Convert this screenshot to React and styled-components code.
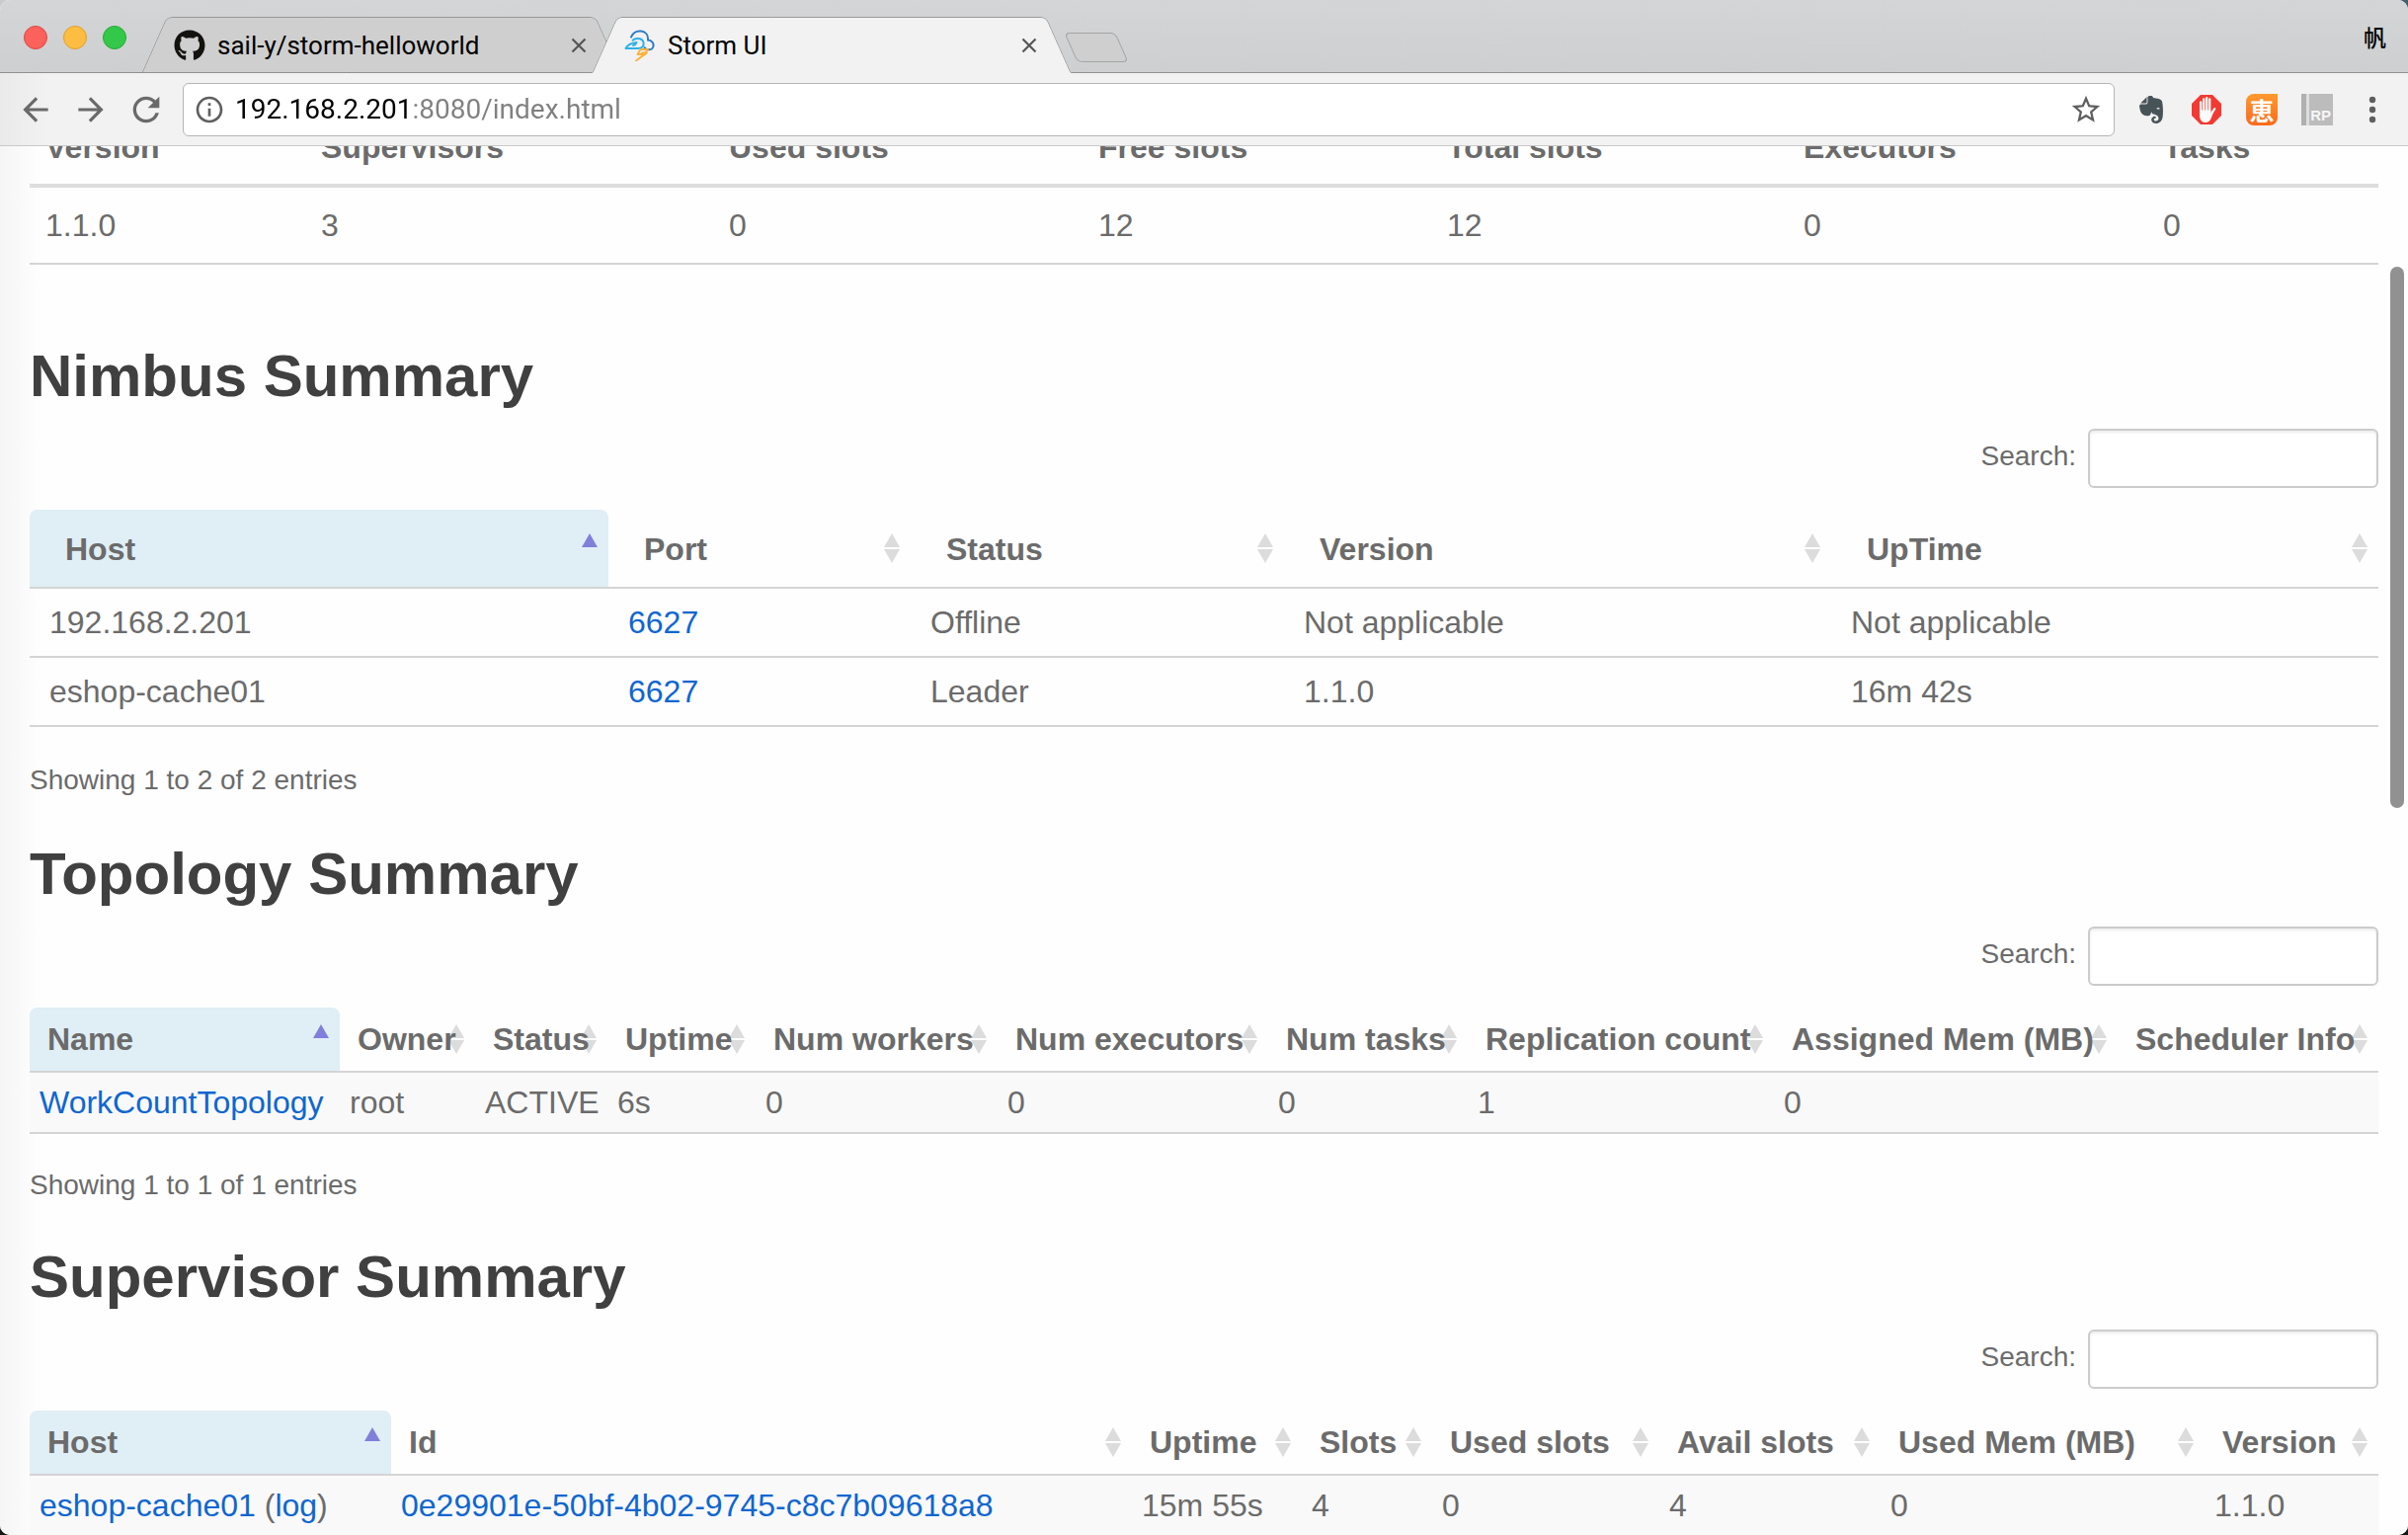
import React from "react";
import styled, { createGlobalStyle, css } from "styled-components";
import { FaEvernote, FaGithub } from "react-icons/fa";
import {
  MdArrowBack,
  MdArrowForward,
  MdInfoOutline,
  MdRefresh,
  MdStarBorder,
} from "react-icons/md";

const SANS = `"Liberation Sans", Arial, sans-serif`;
const CHROME = `Roboto, "Noto Sans CJK SC", sans-serif`;
const LINE = "#d4d4d4";

const GlobalStyle = createGlobalStyle`
  * { box-sizing: border-box; }
  body { margin: 0; background: #151515; }
  button { margin: 0; padding: 0; border: 0; background: none; color: inherit; font: inherit; cursor: pointer; }
`;

/* ---------- window ---------- */

const Desktop = styled.div`
  height: 100vh;
  background:
    linear-gradient(90deg, #c9cccd 50%, #41606c 50%) top / 100% 24px no-repeat,
    #151515;
`;

const Window = styled.div`
  display: flex;
  flex-direction: column;
  height: 100%;
  overflow: hidden;
  border-radius: 10px;
  background: #fefefe;
`;

const TabStrip = styled.div`
  flex: none;
  display: flex;
  align-items: flex-end;
  height: 74px;
  padding: 0 22px 0 24px;
  border-bottom: 1px solid #8f9091;
  background: linear-gradient(#d3d5d6, #cdcfd0);
  font-family: ${CHROME};
`;

const TrafficLights = styled.div`
  display: flex;
  gap: 16px;
  width: 120px;
  padding-bottom: 23px;
`;

const Light = styled.button`
  width: 24px;
  height: 24px;
  border: 1px solid ${(p) => p.$edge};
  border-radius: 50%;
  background: ${(p) => p.$fill};
`;

const tabSide = css`
  content: "";
  position: absolute;
  z-index: -1;
  top: 0;
  bottom: 0;
  border: 1px solid #97989a;
  border-bottom-color: ${(p) => (p.$active ? "#f2f2f2" : "#8f9091")};
  background: ${(p) => (p.$active ? "#f2f2f2" : "#cfcfcf")};
`;

const Tab = styled.div`
  position: relative;
  z-index: ${(p) => (p.$active ? 2 : 1)};
  display: flex;
  align-items: center;
  width: 484px;
  height: 57px;
  margin: 0 -28px -1px 0;
  padding: 0 34px 0 32px;

  &::before {
    ${tabSide}
    left: 12px;
    right: 40%;
    border-right: 0;
    border-radius: 6px 0 0 0;
    transform: skewX(-24deg);
  }

  &::after {
    ${tabSide}
    left: 40%;
    right: 12px;
    border-left: 0;
    border-radius: 0 6px 0 0;
    transform: skewX(24deg);
  }
`;

const TabLink = styled.a`
  flex: 1;
  display: flex;
  align-items: center;
  gap: 12px;
  color: #000;
  font-size: 26px;
  line-height: 32px;
  text-decoration: none;
  white-space: nowrap;

  svg {
    flex: none;
    width: 32px;
    height: 32px;
  }
`;

const CloseButton = styled.button`
  display: flex;
  width: 16px;
  height: 16px;
`;

const NewTab = styled.button`
  width: 52px;
  height: 30px;
  margin: 0 0 10px 28px;
  border: 1px solid #a3a4a5;
  border-radius: 5px;
  background: #cfcfcf;
  transform: skewX(24deg);
`;

const Profile = styled.button`
  margin-left: auto;
  padding-bottom: 17px;
  color: #000;
  font-size: 23px;
  font-weight: 500;
  line-height: 32px;
`;

const Toolbar = styled.div`
  flex: none;
  display: flex;
  align-items: center;
  height: 74px;
  padding: 0 20px 0 18px;
  border-bottom: 1px solid #c9c9c9;
  background: linear-gradient(90deg, #eaeaea, #f2f2f2 50px);
`;

const NavButtons = styled.div`
  display: flex;
  gap: 20px;
  width: 167px;
  color: #6a6a6a;
`;

const IconButton = styled.button`
  display: flex;
  align-items: center;
  justify-content: center;
  width: ${(p) => p.$size || 36}px;
  height: ${(p) => p.$size || 36}px;

  svg {
    flex: none;
  }
`;

const AddressBar = styled.div`
  flex: 1;
  display: flex;
  align-items: center;
  height: 54px;
  padding: 0 10px;
  border: 1px solid #b5b5b5;
  border-radius: 6px;
  background: #fff;
  color: #5f5f5f;
`;

/* The host part of the address is black, the rest of it grey. */
const AddressInput = styled.input`
  flex: 1;
  min-width: 0;
  margin-left: 10px;
  padding: 0;
  border: 0;
  outline: 0;
  color: #000;
  font: 28px/36px ${CHROME};
  background: linear-gradient(90deg, #000 178px, #808080 178px);
  background-clip: text;
  -webkit-text-fill-color: transparent;
`;

const Extensions = styled.div`
  display: flex;
  gap: 24px;
  padding-left: 21px;
`;

const Coupon = styled.span`
  display: flex;
  align-items: center;
  justify-content: center;
  width: 32px;
  height: 32px;
  border-radius: 8px 0 8px 8px;
  background: linear-gradient(#ff9a2e, #fb6a1c);
  color: #fff;
  font: 700 25px/32px "Noto Sans CJK JP", sans-serif;
`;

const Axure = styled.span`
  display: flex;
  align-items: flex-end;
  justify-content: flex-end;
  width: 32px;
  height: 32px;
  padding: 0 2px 1px 0;
  background: linear-gradient(90deg, #b0b0b0 5px, #dedede 5px 8px, #bcbcbc 8px);
  color: #f6f6f6;
  font: 700 15px/18px ${SANS};
`;

/* ---------- page ---------- */

const Viewport = styled.div`
  position: relative;
  flex: 1;
  min-height: 0;
  overflow: hidden;
  background: linear-gradient(90deg, #f5f5f5, #fefefe 40px);
`;

const ScrollThumb = styled.div`
  position: absolute;
  top: 122px;
  right: 4px;
  width: 14px;
  height: 548px;
  border-radius: 7px;
  background: #919191;
`;

/* Scrolled so that the heading row of the first table is partly out of view. */
const Page = styled.main`
  margin-top: -33px;
  padding: 0 30px;
  color: #6b6b6b;
  font: 32px/36px ${SANS};
`;

const Heading = styled.h2`
  margin: 0 0 23px;
  color: #404040;
  font-size: 60px;
  line-height: 60px;
`;

const Section = styled.section`
  padding-top: ${(p) => p.$gap}px;
`;

const Filter = styled.label`
  display: flex;
  align-items: center;
  justify-content: flex-end;
  gap: 12px;
  margin-bottom: 22px;
  font-size: 28px;
  line-height: 32px;

  span {
    padding-bottom: 4px;
  }
`;

const SearchInput = styled.input`
  width: 294px;
  height: 60px;
  padding: 0 12px;
  border: 2px solid #ccc;
  border-radius: 6px;
  background: #fff;
  box-shadow: inset 0 2px 3px rgba(0, 0, 0, 0.08);
  color: #6b6b6b;
  font: 28px/32px ${SANS};
`;

const Table = styled.table`
  width: 100%;
  table-layout: fixed;
  border-collapse: separate;
  border-spacing: 0;
  text-align: left;
  white-space: nowrap;
`;

const Col = styled.col`
  width: ${(p) => p.$width}px;
`;

const ClusterHead = styled.th`
  padding: 16px 16px 19px;
  border-bottom: 4px solid #ddd;
`;

const ClusterCell = styled.td`
  padding: 20px 16px;
  border-bottom: 2px solid ${LINE};
`;

const SortHead = styled.th`
  position: relative;
  padding: 0;
  border-bottom: 2px solid ${LINE};
  border-radius: ${(p) => (p.$sorted ? "8px 8px 0 0" : "0")};
  background: ${(p) => (p.$sorted ? "#e0eef6" : "none")};
`;

const SortButton = styled.button`
  display: block;
  width: 100%;
  padding: ${(p) => (p.$compact ? "14px 0 14px 18px" : "22px 0 20px 36px")};
  text-align: left;

  span {
    position: relative;
  }
`;

const SortMark = styled.svg`
  position: absolute;
  top: ${(p) => (p.$compact ? 17 : 24)}px;
  right: 11px;
  width: 16px;
  height: 30px;
`;

const Cell = styled.td`
  padding: ${(p) => (p.$compact ? "12px 10px" : "16px 20px")};
  border-bottom: 2px solid ${LINE};
  background: ${(p) => (p.$compact ? "#f9f9f9" : "none")};
`;

const Info = styled.div`
  padding-top: ${(p) => (p.$compact ? 36 : 38)}px;
  font-size: 28px;
  line-height: 32px;
`;

const Link = styled.a`
  color: #0f66d0;
  text-decoration: none;
`;

/* ---------- drawings ---------- */

const Cross = () => (
  <svg viewBox="0 0 16 16" width="16" height="16" aria-hidden="true">
    <path d="M1.5 1.5l13 13M14.5 1.5l-13 13" stroke="#555" strokeWidth="2.2" fill="none" />
  </svg>
);

const StormLogo = () => (
  <svg viewBox="0 0 32 32" fill="none" strokeWidth="2" strokeLinecap="round" strokeLinejoin="round" aria-hidden="true">
    <path d="M7 7.5C9 3 13 1.200 17 1.600c5 .6 7.500 4.400 7 9 4 .2 6 3 5.500 6-.5 2.800-3 4-5.500 3.600-1.600-.2-2.800-1-3.400-2" stroke="#2b7cc4" />
    <path d="M1.500 19h12.500c4 0 6.200-2.600 5.600-5.600-.6-3-3.400-4.600-6.600-4.400-2 .1-3.200.8-4.400 1.800M1.500 19c1.500-2.800 4.500-5.500 11-6-.4 1.400-1.500 2.600-3.500 3" stroke="#2db0e8" />
    <path d="M16.500 20h7.500l-2.500 3.500M16.500 20l-3 5h7L12 31.500l11-8h-5" stroke="#fbb03b" strokeWidth="1.800" />
  </svg>
);

const StopHand = () => (
  <svg viewBox="0 0 32 32" width="32" height="32" aria-hidden="true">
    <path d="M10 1h12l9 9v12l-9 9H10l-9-9V10z" fill="#f23a32" />
    <g stroke="#fbfbfb" strokeWidth="2.300" strokeLinecap="round" fill="none">
      <path d="M10.200 8.500V19M13.200 5.500V18M16.200 4.200V18M19.200 5.500V18M20.800 20.500l3.400-5.300" />
    </g>
    <path d="M9 16.500h11.400v3.500l2.600-1.500-2.200 6c-1.200 3-3.200 4.500-6 4.500C11 29 9 26 9 21z" fill="#fbfbfb" />
  </svg>
);

const Dots = () => (
  <svg viewBox="0 0 32 32" width="32" height="32" fill="#5f5f5f" aria-hidden="true">
    <circle cx="16" cy="6" r="3.200" />
    <circle cx="16" cy="16" r="3.200" />
    <circle cx="16" cy="26" r="3.200" />
  </svg>
);

const SortIcon = ({ sorted, compact }) => (
  <SortMark $compact={compact} viewBox="0 0 16 30" aria-hidden="true">
    <path d="M8 0l8 14H0z" fill={sorted ? "#8080db" : "#dcdcdc"} />
    {!sorted && <path d="M8 30l8-14H0z" fill="#dcdcdc" />}
  </SortMark>
);

/* ---------- data ---------- */

const cluster = {
  columns: [
    ["Version", 279],
    ["Supervisors", 413],
    ["Used slots", 374],
    ["Free slots", 353],
    ["Total slots", 361],
    ["Executors", 364],
    ["Tasks", 234],
  ],
  row: ["1.1.0", "3", "0", "12", "12", "0", "0"],
};

const nimbus = {
  id: "nimbus",
  title: "Nimbus Summary",
  columns: [
    ["Host", 586],
    ["Port", 306],
    ["Status", 378],
    ["Version", 554],
    ["UpTime", 554],
  ],
  rows: [
    ["192.168.2.201", <Link href="#log">6627</Link>, "Offline", "Not applicable", "Not applicable"],
    ["eshop-cache01", <Link href="#log">6627</Link>, "Leader", "1.1.0", "16m 42s"],
  ],
  info: "Showing 1 to 2 of 2 entries",
};

const topology = {
  id: "topology",
  title: "Topology Summary",
  columns: [
    ["Name", 314],
    ["Owner", 137],
    ["Status", 134],
    ["Uptime", 150],
    ["Num workers", 245],
    ["Num executors", 274],
    ["Num tasks", 202],
    ["Replication count", 310],
    ["Assigned Mem (MB)", 348],
    ["Scheduler Info", 264],
  ],
  rows: [
    [<Link href="#topology">WorkCountTopology</Link>, "root", "ACTIVE", "6s", "0", "0", "0", "1", "0", ""],
  ],
  info: "Showing 1 to 1 of 1 entries",
};

const supervisor = {
  id: "supervisor",
  title: "Supervisor Summary",
  columns: [
    ["Host", 366],
    ["Id", 750],
    ["Uptime", 172],
    ["Slots", 132],
    ["Used slots", 230],
    ["Avail slots", 224],
    ["Used Mem (MB)", 328],
    ["Version", 176],
  ],
  rows: [
    [
      <>
        <Link href="#host">eshop-cache01</Link> (<Link href="#log">log</Link>)
      </>,
      <Link href="#supervisor">0e29901e-50bf-4b02-9745-c8c7b09618a8</Link>,
      "15m 55s",
      "4",
      "0",
      "4",
      "0",
      "1.1.0",
    ],
  ],
};

/* ---------- components ---------- */

function Columns({ columns }) {
  return (
    <colgroup>
      {columns.map(([name, width]) => (
        <Col key={name} $width={width} />
      ))}
    </colgroup>
  );
}

function ClusterTable({ columns, row }) {
  return (
    <Table>
      <Columns columns={columns} />
      <thead>
        <tr>
          {columns.map(([name]) => (
            <ClusterHead key={name}>{name}</ClusterHead>
          ))}
        </tr>
      </thead>
      <tbody>
        <tr>
          {row.map((value, i) => (
            <ClusterCell key={i}>{value}</ClusterCell>
          ))}
        </tr>
      </tbody>
    </Table>
  );
}

function Summary({ data, gap, compact }) {
  const searchId = `${data.id}-search`;
  return (
    <Section $gap={gap}>
      <Heading>{data.title}</Heading>
      <Filter htmlFor={searchId}>
        <span>Search:</span>
        <SearchInput id={searchId} type="search" />
      </Filter>
      <Table>
        <Columns columns={data.columns} />
        <thead>
          <tr>
            {data.columns.map(([name], i) => (
              <SortHead key={name} $sorted={i === 0} aria-sort={i === 0 ? "ascending" : "none"}>
                <SortIcon sorted={i === 0} compact={compact} />
                <SortButton $compact={compact}>
                  <span>{name}</span>
                </SortButton>
              </SortHead>
            ))}
          </tr>
        </thead>
        <tbody>
          {data.rows.map((row, r) => (
            <tr key={r}>
              {row.map((value, i) => (
                <Cell key={i} $compact={compact}>
                  {value}
                </Cell>
              ))}
            </tr>
          ))}
        </tbody>
      </Table>
      {data.info && <Info $compact={compact}>{data.info}</Info>}
    </Section>
  );
}

export default function App() {
  return (
    <Desktop>
      <GlobalStyle />
      <Window>
        <TabStrip>
          <TrafficLights>
            <Light $fill="#fc615c" $edge="#e2453f" aria-label="Close window" />
            <Light $fill="#fdbd40" $edge="#e0a02b" aria-label="Minimize window" />
            <Light $fill="#34c84a" $edge="#24aa35" aria-label="Zoom window" />
          </TrafficLights>
          <Tab>
            <TabLink href="#github">
              <FaGithub color="#14120f" />
              sail-y/storm-helloworld
            </TabLink>
            <CloseButton aria-label="Close tab">
              <Cross />
            </CloseButton>
          </Tab>
          <Tab $active>
            <TabLink href="#storm">
              <StormLogo />
              Storm UI
            </TabLink>
            <CloseButton aria-label="Close tab">
              <Cross />
            </CloseButton>
          </Tab>
          <NewTab aria-label="New tab" />
          <Profile>帆</Profile>
        </TabStrip>

        <Toolbar>
          <NavButtons>
            <IconButton aria-label="Back">
              <MdArrowBack size={38} />
            </IconButton>
            <IconButton aria-label="Forward">
              <MdArrowForward size={38} />
            </IconButton>
            <IconButton aria-label="Reload">
              <MdRefresh size={40} />
            </IconButton>
          </NavButtons>
          <AddressBar>
            <IconButton $size={32} aria-label="Site information">
              <MdInfoOutline size={32} />
            </IconButton>
            <AddressInput aria-label="Address" defaultValue="192.168.2.201:8080/index.html" spellCheck={false} />
            <IconButton aria-label="Bookmark this page">
              <MdStarBorder size={34} />
            </IconButton>
          </AddressBar>
          <Extensions>
            <IconButton $size={32} aria-label="Evernote">
              <FaEvernote size={32} color="#485358" />
            </IconButton>
            <IconButton $size={32} aria-label="Ad blocker">
              <StopHand />
            </IconButton>
            <IconButton $size={32} aria-label="Coupons">
              <Coupon>恵</Coupon>
            </IconButton>
            <IconButton $size={32} aria-label="Prototype viewer">
              <Axure>RP</Axure>
            </IconButton>
            <IconButton $size={32} aria-label="Menu">
              <Dots />
            </IconButton>
          </Extensions>
        </Toolbar>

        <Viewport>
          <Page>
            <ClusterTable {...cluster} />
            <Summary data={nimbus} gap={83} />
            <Summary data={topology} gap={49} compact />
            <Summary data={supervisor} gap={47} compact />
          </Page>
          <ScrollThumb />
        </Viewport>
      </Window>
    </Desktop>
  );
}
